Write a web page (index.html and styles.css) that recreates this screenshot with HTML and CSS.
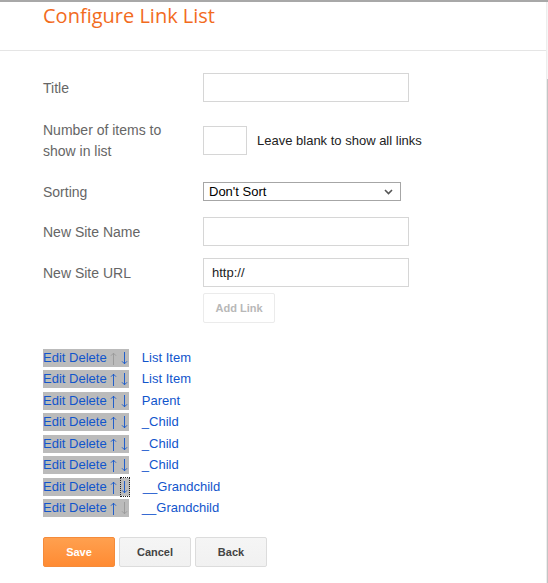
FILE: index.html
```html
<!DOCTYPE html>
<html>
<head>
<meta charset="utf-8">
<title>Configure Link List</title>
<link rel="stylesheet" href="styles.css">
</head>
<body>
<div class="page">
  <div class="main">
    <div class="header">
      <h1 class="title">Configure Link List</h1>
    </div>
    <div class="form">
      <div class="row row-first">
        <label class="label">Title</label>
        <input class="input input-wide" type="text">
      </div>
      <div class="row">
        <label class="label">Number of items to show in list</label>
        <input class="input input-num" type="text">
        <span class="hint">Leave blank to show all links</span>
      </div>
      <div class="row row-sort">
        <label class="label">Sorting</label>
        <div class="select">
          <span class="select-text">Don't Sort</span>
          <svg class="chevron" width="9" height="6" viewBox="0 0 9 6"><path d="M1 1 L4.5 4.5 L8 1" fill="none" stroke="#555" stroke-width="1.6"/></svg>
        </div>
      </div>
      <div class="row row-sm">
        <label class="label">New Site Name</label>
        <input class="input input-wide" type="text">
      </div>
      <div class="row row-url">
        <label class="label">New Site URL</label>
        <input class="input input-wide" type="text" value="http://">
      </div>
      <div class="row row-btn">
        <span class="label"></span>
        <button class="btn btn-disabled">Add Link</button>
      </div>

      <div class="links">
        <div class="link-row"><span class="band"><a class="act">Edit</a> <a class="act">Delete</a> <a class="act arrow off" title="↑"><svg class="arr" width="7" height="13" viewBox="0 0 7 13"><path d="M3.5 1.2V13M1 3.7L3.5 1.2L6 3.7"/></svg></a> <a class="act arrow" title="↓"><svg class="arr" width="7" height="13" viewBox="0 0 7 13"><path d="M3.5 0V11.8M1 9.3L3.5 11.8L6 9.3"/></svg></a></span><a class="name">List Item</a></div>
        <div class="link-row"><span class="band"><a class="act">Edit</a> <a class="act">Delete</a> <a class="act arrow" title="↑"><svg class="arr" width="7" height="13" viewBox="0 0 7 13"><path d="M3.5 1.2V13M1 3.7L3.5 1.2L6 3.7"/></svg></a> <a class="act arrow" title="↓"><svg class="arr" width="7" height="13" viewBox="0 0 7 13"><path d="M3.5 0V11.8M1 9.3L3.5 11.8L6 9.3"/></svg></a></span><a class="name">List Item</a></div>
        <div class="link-row"><span class="band"><a class="act">Edit</a> <a class="act">Delete</a> <a class="act arrow" title="↑"><svg class="arr" width="7" height="13" viewBox="0 0 7 13"><path d="M3.5 1.2V13M1 3.7L3.5 1.2L6 3.7"/></svg></a> <a class="act arrow" title="↓"><svg class="arr" width="7" height="13" viewBox="0 0 7 13"><path d="M3.5 0V11.8M1 9.3L3.5 11.8L6 9.3"/></svg></a></span><a class="name">Parent</a></div>
        <div class="link-row"><span class="band"><a class="act">Edit</a> <a class="act">Delete</a> <a class="act arrow" title="↑"><svg class="arr" width="7" height="13" viewBox="0 0 7 13"><path d="M3.5 1.2V13M1 3.7L3.5 1.2L6 3.7"/></svg></a> <a class="act arrow" title="↓"><svg class="arr" width="7" height="13" viewBox="0 0 7 13"><path d="M3.5 0V11.8M1 9.3L3.5 11.8L6 9.3"/></svg></a></span><a class="name">_Child</a></div>
        <div class="link-row"><span class="band"><a class="act">Edit</a> <a class="act">Delete</a> <a class="act arrow" title="↑"><svg class="arr" width="7" height="13" viewBox="0 0 7 13"><path d="M3.5 1.2V13M1 3.7L3.5 1.2L6 3.7"/></svg></a> <a class="act arrow" title="↓"><svg class="arr" width="7" height="13" viewBox="0 0 7 13"><path d="M3.5 0V11.8M1 9.3L3.5 11.8L6 9.3"/></svg></a></span><a class="name">_Child</a></div>
        <div class="link-row"><span class="band"><a class="act">Edit</a> <a class="act">Delete</a> <a class="act arrow" title="↑"><svg class="arr" width="7" height="13" viewBox="0 0 7 13"><path d="M3.5 1.2V13M1 3.7L3.5 1.2L6 3.7"/></svg></a> <a class="act arrow" title="↓"><svg class="arr" width="7" height="13" viewBox="0 0 7 13"><path d="M3.5 0V11.8M1 9.3L3.5 11.8L6 9.3"/></svg></a></span><a class="name">_Child</a></div>
        <div class="link-row"><span class="band"><a class="act">Edit</a> <a class="act">Delete</a> <a class="act arrow" title="↑"><svg class="arr" width="7" height="13" viewBox="0 0 7 13"><path d="M3.5 1.2V13M1 3.7L3.5 1.2L6 3.7"/></svg></a> <a class="act arrow focus" title="↓"><svg class="arr" width="7" height="13" viewBox="0 0 7 13"><path d="M3.5 0V11.8M1 9.3L3.5 11.8L6 9.3"/></svg></a></span><a class="name">__Grandchild</a></div>
        <div class="link-row"><span class="band"><a class="act">Edit</a> <a class="act">Delete</a> <a class="act arrow" title="↑"><svg class="arr" width="7" height="13" viewBox="0 0 7 13"><path d="M3.5 1.2V13M1 3.7L3.5 1.2L6 3.7"/></svg></a> <a class="act arrow off" title="↓"><svg class="arr" width="7" height="13" viewBox="0 0 7 13"><path d="M3.5 0V11.8M1 9.3L3.5 11.8L6 9.3"/></svg></a></span><a class="name">__Grandchild</a></div>
      </div>

      <div class="actions">
        <button class="btn btn-save">Save</button>
        <button class="btn btn-plain">Cancel</button>
        <button class="btn btn-plain">Back</button>
      </div>
    </div>
  </div>
  <div class="rail"></div>
</div>
</body>
</html>
```

FILE: styles.css
```css
html, body {
  margin: 0;
  padding: 0;
  background: #fff;
}

body {
  font-family: "Liberation Sans", Arial, sans-serif;
  font-size: 13px;
  color: #222;
}

.page {
  display: flex;
  min-height: 100vh;
  box-sizing: border-box;
  border-top: 2px solid #a8a8a8;
}

.main {
  flex: 1;
  border-right: 1px solid #ededed;
}

.rail {
  width: 1px;
  background: linear-gradient(to bottom, #f6f6f6 77px, #c4c4c4 77px);
}

.header {
  padding: 0 0 21px 43px;
  border-bottom: 1px solid #e5e5e5;
}

.title {
  margin: 0;
  font-family: "Open Sans", sans-serif;
  font-weight: 400;
  font-size: 20px;
  line-height: 27px;
  color: #f26b1d;
}

.form {
  padding-left: 43px;
}

.row {
  display: flex;
  align-items: center;
  min-height: 29px;
  margin-top: 17px;
}

.row-first { margin-top: 22px; }
.row-sort { margin-top: 15px; }
.row-sm { margin-top: 11px; }
.row-url { margin-top: 12px; }
.row-btn { margin-top: 6px; }

.label {
  width: 140px;
  padding-right: 20px;
  padding-top: 1px;
  flex: none;
  font-size: 14px;
  line-height: 21px;
  color: #666;
}

.input {
  box-sizing: border-box;
  height: 29px;
  border: 1px solid #d6d6d6;
  border-radius: 0;
  padding: 0 8px;
  margin: 0;
  font-family: "Liberation Sans", Arial, sans-serif;
  font-size: 13px;
  color: #222;
  background: #fff;
  outline: none;
}

.input-wide { width: 206px; }
.input-num { width: 44px; }

.hint {
  margin-left: 10px;
  font-size: 13px;
  color: #222;
}

.select {
  box-sizing: border-box;
  width: 198px;
  height: 19px;
  border: 1px solid #a6a6a6;
  display: flex;
  align-items: center;
  justify-content: space-between;
  padding: 0 7px 0 5px;
  font-size: 13px;
  color: #000;
  background: #fff;
}

.chevron { display: block; }

.btn {
  box-sizing: border-box;
  width: 72px;
  height: 30px;
  margin: 0;
  padding: 0;
  font-family: "Liberation Sans", Arial, sans-serif;
  font-size: 11px;
  font-weight: bold;
  border-radius: 2px;
}

.btn-disabled {
  background: #fff;
  border: 1px solid #ebebeb;
  color: #b8b8b8;
}

.links {
  margin-top: 24px;
}

.link-row {
  display: flex;
  align-items: center;
  height: 21.5px;
}

.band {
  display: inline-block;
  line-height: 18px;
  height: 18px;
  background: #bbb;
  padding-right: 1px;
  white-space: pre;
}

.act {
  color: #15c;
}

.act.off {
  color: #999;
}

.arrow {
  display: inline-block;
  width: 7px;
  height: 18px;
  vertical-align: top;
}

.arr {
  display: block;
  margin-top: 3px;
  fill: none;
  stroke: currentColor;
  stroke-width: 0.9;
}

.act.focus {
  outline: 1px dotted #222;
  outline-offset: 0;
  width: 8px;
}

.name {
  margin-left: 13px;
  line-height: 18px;
  color: #15c;
}

.actions {
  display: flex;
  gap: 4px;
  margin-top: 18px;
}

.btn-save {
  background: linear-gradient(to bottom, #ffa04f, #ff8b33);
  border: 1px solid #f58b3a;
  color: #fff;
}

.btn-plain {
  background: linear-gradient(to bottom, #f5f5f5, #f1f1f1);
  border: 1px solid #dcdcdc;
  color: #444;
}
```
